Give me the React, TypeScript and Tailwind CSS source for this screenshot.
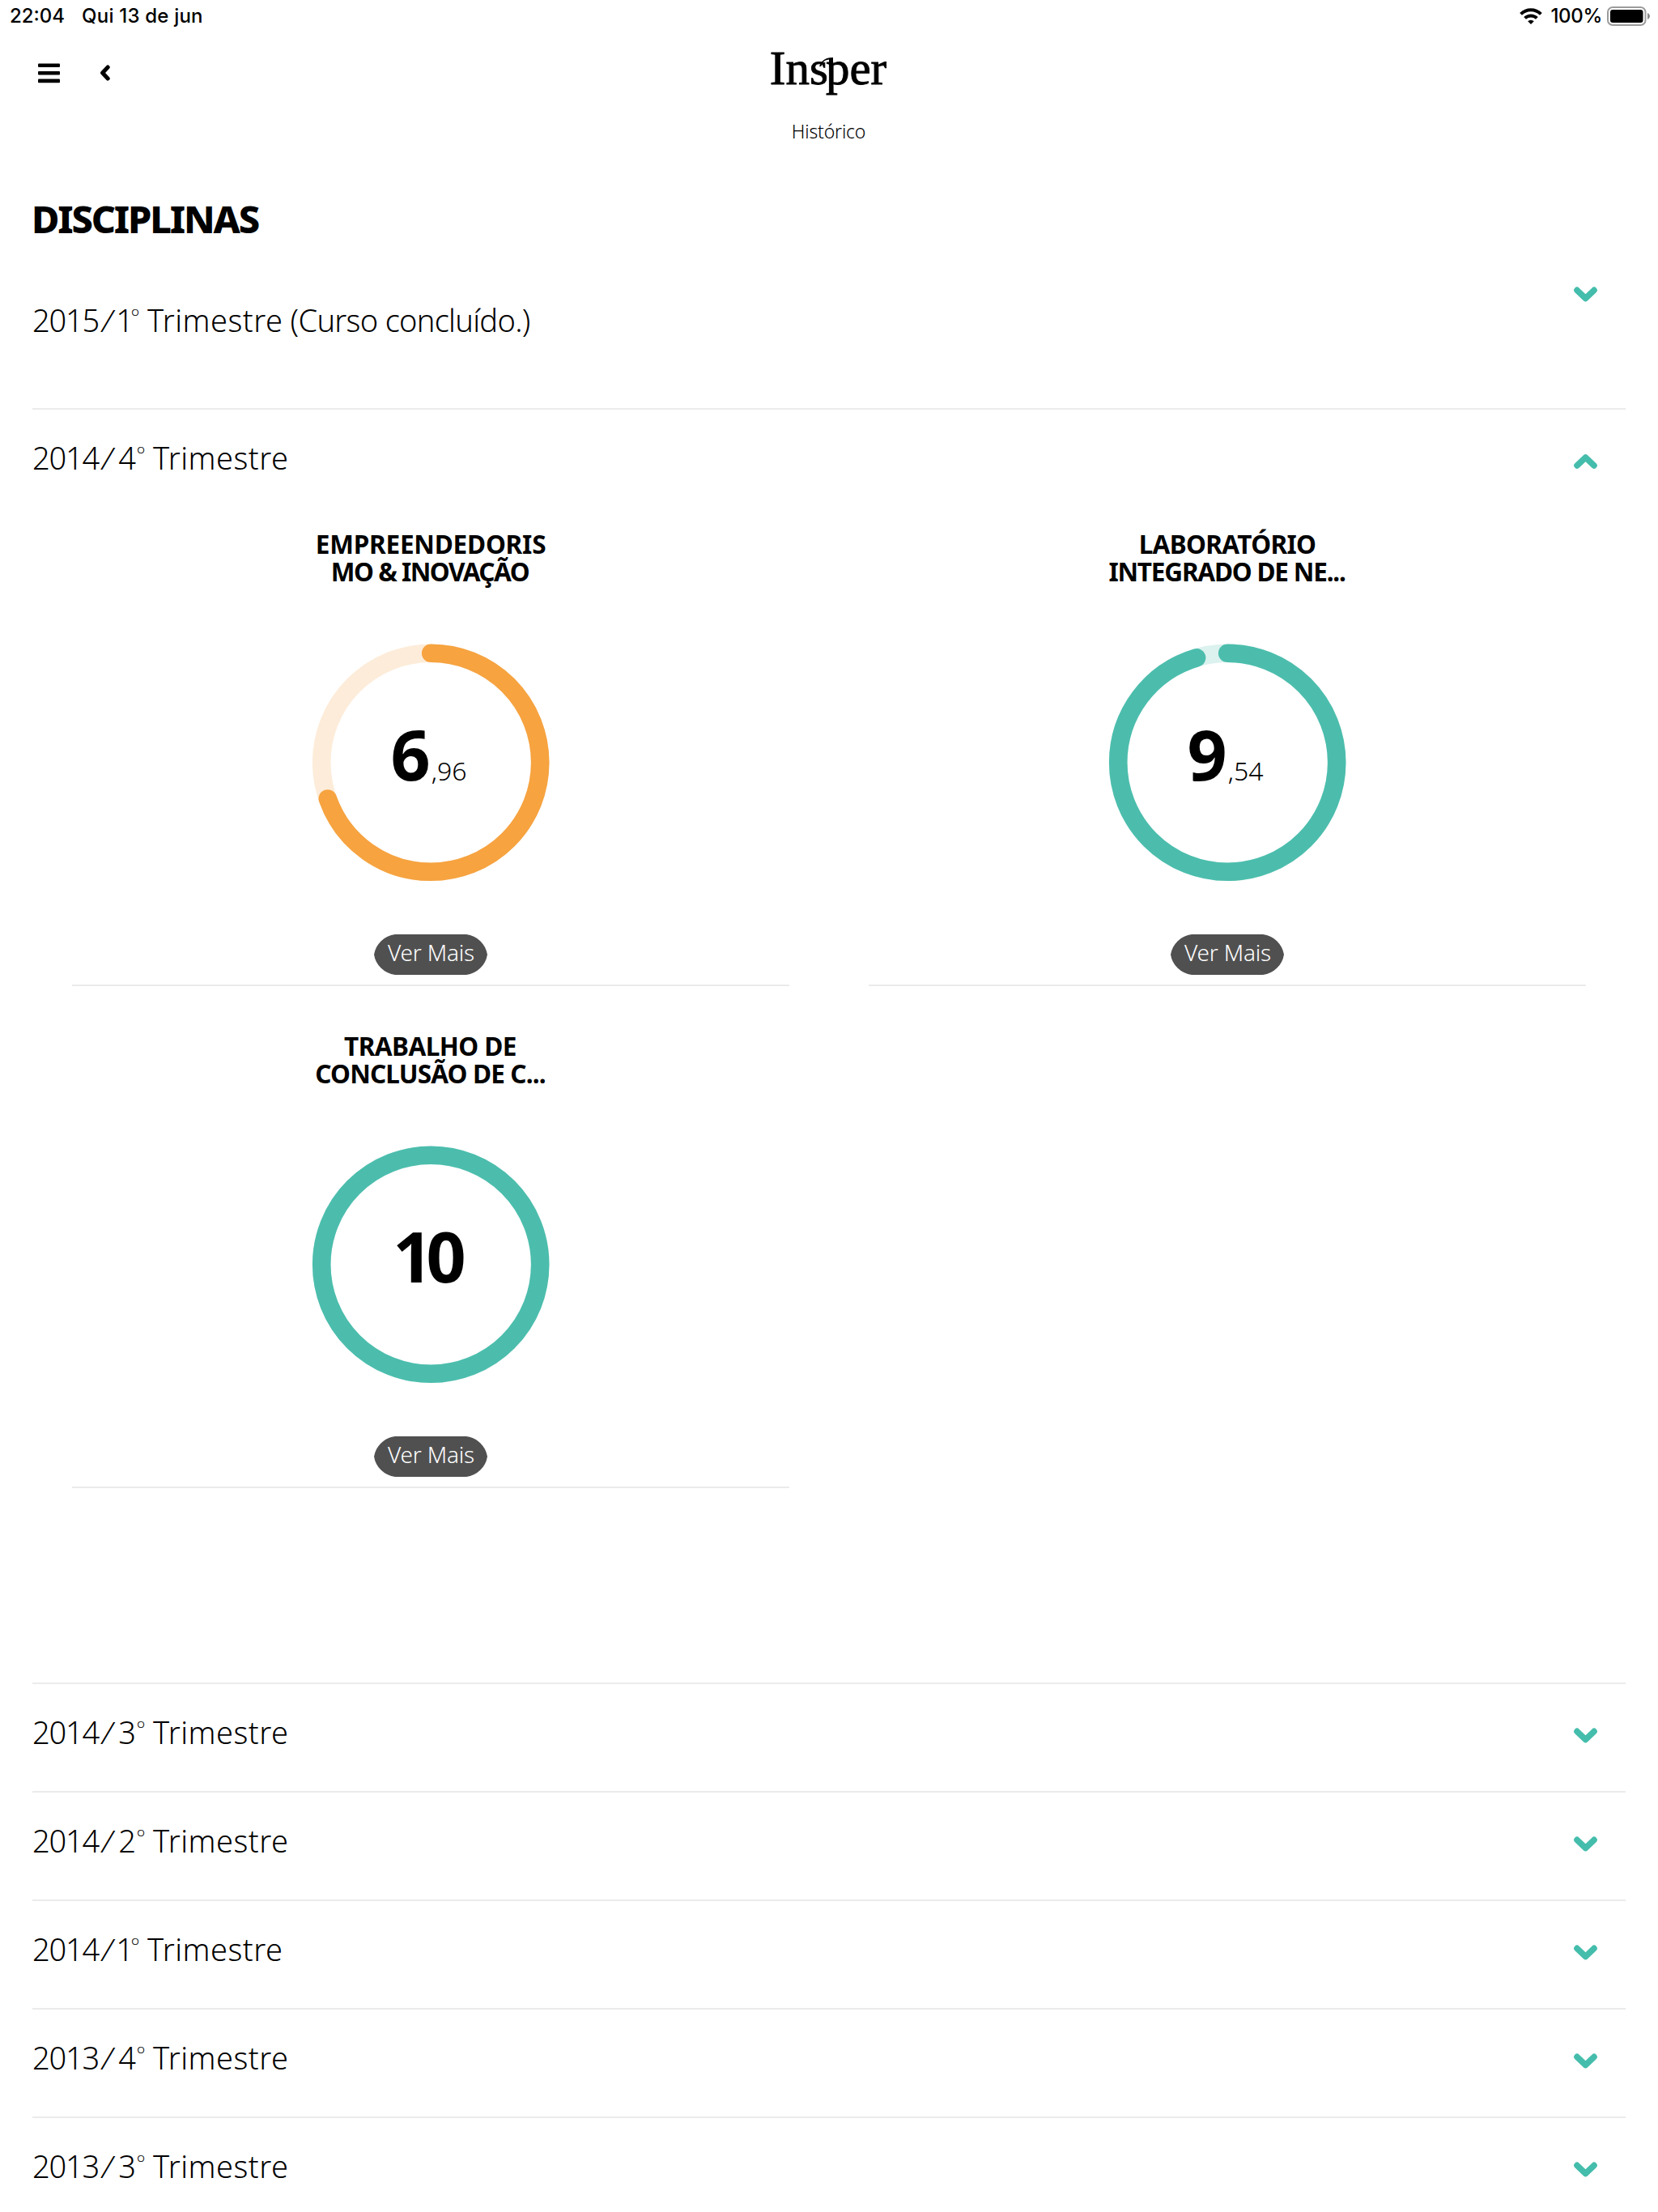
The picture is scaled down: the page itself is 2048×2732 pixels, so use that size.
import React from 'react';

interface Line {
  text: string;
  tracking: string;
}

interface Course {
  title: Line[];
  whole: string;
  decimals?: string;
  percent: number;
  color: string;
  track: string;
}

interface Term {
  year: string;
  quarter: string;
  note?: string;
}

const courses: Course[] = [
  {
    title: [
      { text: 'EMPREENDEDORIS', tracking: 'tracking-[-0.2px]' },
      { text: 'MO & INOVAÇÃO', tracking: 'tracking-[-1.5px] pr-[2px]' },
    ],
    whole: '6',
    decimals: ',96',
    percent: 69.6,
    color: '#f6a340',
    track: '#fdecd9',
  },
  {
    title: [
      { text: 'LABORATÓRIO', tracking: 'tracking-[-0.65px]' },
      { text: 'INTEGRADO DE NE...', tracking: 'tracking-[-1.2px] pr-px' },
    ],
    whole: '9',
    decimals: ',54',
    percent: 95.4,
    color: '#4cbdad',
    track: '#dbf2ee',
  },
  {
    title: [
      { text: 'TRABALHO DE', tracking: 'tracking-[-0.55px] pr-px' },
      { text: 'CONCLUSÃO DE C...', tracking: 'tracking-[-0.85px] pr-px' },
    ],
    whole: '10',
    percent: 100,
    color: '#4cbdad',
    track: '#dbf2ee',
  },
];

const closedTerms: Term[] = [
  { year: '2014', quarter: '3' },
  { year: '2014', quarter: '2' },
  { year: '2014', quarter: '1' },
  { year: '2013', quarter: '4' },
  { year: '2013', quarter: '3' },
];

const Chevron: React.FC<{ up?: boolean; className?: string }> = ({ up, className = '' }) => (
  <svg width="29" height="19" viewBox="0 0 29 19" fill="none" className={className}>
    <path
      d={up ? 'M4 15L14.5 5L25 15' : 'M4 4.4L14.5 14.4L25 4.4'}
      stroke="#45bdac"
      strokeWidth="7.6"
      strokeLinecap="round"
      strokeLinejoin="round"
    />
  </svg>
);

const StatusBar: React.FC = () => (
  <div className="flex h-10 items-center justify-between pr-[9px] pl-[12px] font-['Inter',sans-serif] text-[24px] font-medium">
    <div className="flex gap-[21px]">
      <span>22:04</span>
      <span className="tracking-[0.2px]">Qui 13 de jun</span>
    </div>
    <div className="flex items-center">
      <svg width="28" height="20" viewBox="0 0 28 20" className="mr-[10px]" fill="none" stroke="black" strokeWidth="4">
        <path d="M1.6 7.4A17.6 17.6 0 0 1 26.4 7.4" />
        <path d="M6.6 12.4A10.6 10.6 0 0 1 21.4 12.4" />
        <path d="M14 20L10.2 16.2A5.4 5.4 0 0 1 17.8 16.2Z" fill="black" stroke="none" />
      </svg>
      <span className="tracking-[-0.3px]">100%</span>
      <svg width="54" height="24" viewBox="0 0 54 24" className="ml-[6px]">
        <rect x="1" y="1" width="46.5" height="22" rx="6" fill="none" stroke="#9b9b9b" strokeWidth="2" />
        <rect x="4" y="4" width="40.5" height="16" rx="3" fill="black" />
        <path d="M50 8C54 10 54 14 50 16Z" fill="#8a8a8a" />
      </svg>
    </div>
  </div>
);

const Logo: React.FC = () => (
  <div className="relative mt-px mr-[2px] h-[58px] font-['Liberation_Serif',serif] text-[59px] leading-[58px] [-webkit-text-stroke:0.9px_black]">
    In<span className="tracking-[-3px]">s</span>per
    {/* stroke joining the s to the stem of the p */}
    <svg width="20" height="14" viewBox="0 0 20 14" className="absolute top-[15px] left-[60px]">
      <path d="M1 12C4 4 9 1.2 18 1V12H13V3.4C8 3.8 5 6 3.4 12Z" fill="black" />
    </svg>
  </div>
);

const Header: React.FC = () => (
  <header className="grid h-[90px] grid-cols-3 px-10 pt-[14px]">
    <div className="flex items-start pt-[24px] pl-[7px]">
      <svg width="27" height="25" viewBox="0 0 27 25">
        <rect y="0.4" width="27" height="4.6" rx="1" />
        <rect y="10" width="27" height="4.6" rx="1" />
        <rect y="19.6" width="27" height="4.6" rx="1" />
      </svg>
      <svg width="14" height="20" viewBox="0 0 14 20" fill="none" className="mt-[2px] ml-[49px]">
        <path d="M10.2 3L3.6 10L10.2 17" stroke="black" strokeWidth="5" strokeLinecap="round" strokeLinejoin="round" />
      </svg>
    </div>
    <div className="flex justify-center">
      <Logo />
    </div>
  </header>
);

const Grade: React.FC<{ course: Course }> = ({ course }) => {
  const radius = 135;
  const length = 2 * Math.PI * radius;
  return (
    <div className="relative mt-[72px] h-[293px] w-[293px]">
      <svg width="293" height="293" viewBox="0 0 293 293" fill="none" strokeWidth="22.6" className="overflow-visible">
        <circle cx="146.2" cy="146.8" r={radius} stroke={course.track} />
        <circle
          cx="146.2"
          cy="146.8"
          r={radius}
          stroke={course.color}
          strokeLinecap="round"
          strokeDasharray={`${(length * course.percent) / 100} ${length}`}
          transform="rotate(-90 146.2 146.8)"
        />
      </svg>
      <div className="absolute inset-0 flex items-baseline justify-center pt-[93px] pr-[5px]">
        <span
          className={`text-[86px] leading-[86px] font-bold ${
            course.decimals ? 'tracking-[-1px]' : 'mr-[6px] tracking-[-8px]'
          }`}
        >
          {course.whole}
        </span>
        {course.decimals && <span className="ml-[2px] text-[32px] leading-[32px] font-light">{course.decimals}</span>}
      </div>
    </div>
  );
};

const CourseCard: React.FC<{ course: Course }> = ({ course }) => (
  <div className="mx-[5%] flex h-[620px] flex-col items-center border-b-2 border-[#ebebeb] pt-[57px]">
    <h3 className="text-center text-[31.5px] leading-[34px] font-bold">
      {course.title.map((line) => (
        <span key={line.text} className={`block ${line.tracking}`}>
          {line.text}
        </span>
      ))}
    </h3>
    <Grade course={course} />
    <button className="relative mt-[66px] h-[50px] w-[140px] text-[28px] font-light tracking-[-0.2px] text-white">
      <svg width="140" height="50" viewBox="0 0 140 50" className="absolute inset-0" fill="#505050">
        <path d="M26 0H114A30 30 0 0 1 140 25A30 30 0 0 1 114 50H26A30 30 0 0 1 0 25A30 30 0 0 1 26 0Z" />
      </svg>
      <span className="relative block h-[50px] pl-px leading-[45px]">Ver Mais</span>
    </button>
  </div>
);

const TermTitle: React.FC<{ term: Term }> = ({ term }) => (
  <h2 className="flex text-[38px] leading-[40px] font-light whitespace-pre">
    <span className="tracking-[-1.2px]">{term.year}</span>
    <span className="mx-[5px] -skew-x-12">/</span>
    <span className={term.quarter === '1' ? '-ml-[2px] tracking-[-4px]' : 'ml-px'}>{term.quarter}</span>
    <span className="mt-[-4px] ml-px text-[28px] font-extralight">º</span>
    <span className="ml-[10px] tracking-[0.5px]">Trimestre</span>
    {term.note && <span className="tracking-[-0.7px]"> {term.note}</span>}
  </h2>
);

const TermHeader: React.FC<{ term: Term; open?: boolean }> = ({ term, open }) => (
  <div className="flex items-start justify-between border-t-2 border-[#ebebeb] pt-[39px] pr-[35px]">
    <TermTitle term={term} />
    <Chevron up={open} className="mt-[15px]" />
  </div>
);

export default function App() {
  return (
    <div className="h-[2732px] w-[2048px] overflow-hidden bg-white font-['Noto_Sans',sans-serif] text-black">
      <StatusBar />
      <Header />
      <p className="h-[100px] pt-[17px] pr-px text-center text-[23px] leading-[30px] font-light tracking-[-0.2px]">
        Histórico
      </p>

      <main className="px-10">
        <h1 className="-ml-px h-[124px] pt-[15px] text-[47px] leading-[50px] font-extrabold tracking-[-2.2px]">
          DISCIPLINAS
        </h1>

        <section className="flex h-[150px] items-start justify-between pr-[35px]">
          <div className="mt-[21px]">
            <TermTitle term={{ year: '2015', quarter: '1', note: '(Curso concluído.)' }} />
          </div>
          <Chevron />
        </section>

        <section className="h-[1574px]">
          <TermHeader term={{ year: '2014', quarter: '4' }} open />
          <div className="mt-[13px] grid grid-cols-2">
            {courses.map((course) => (
              <CourseCard key={course.whole} course={course} />
            ))}
          </div>
        </section>

        {closedTerms.map((term) => (
          <section key={term.year + term.quarter} className="h-[134px]">
            <TermHeader term={term} />
          </section>
        ))}
      </main>
    </div>
  );
}
